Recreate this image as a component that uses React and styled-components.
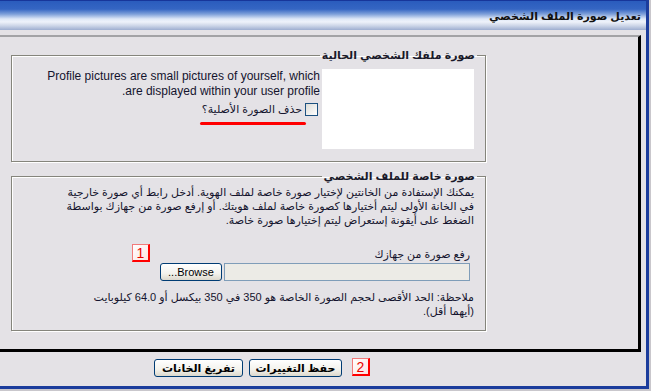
import styled, { createGlobalStyle } from 'styled-components';

const GlobalStyle = createGlobalStyle`
  html, body {
    margin: 0;
    padding: 0;
    background: #c9c7cc;
  }

  body {
    font-family: "Liberation Sans", "DejaVu Sans", sans-serif;
    font-size: 11px;
    color: #14142e;
  }
`;

function App() {
  return (
    <>
      <GlobalStyle />
      <Window dir="rtl">
        <Header>تعديل صورة الملف الشخصي</Header>
        <Body>
          <Panel>
            <Group>
              <Legend>صورة ملفك الشخصي الحالية</Legend>
              <CurrentRow>
                <Preview />
                <Info>
                  <p>
                    Profile pictures are small pictures of yourself, which
                    <br />
                    are displayed within your user profile.
                  </p>
                  <CheckRow>
                    <Check type="checkbox" />
                    <Marked>حذف الصورة الأصلية؟</Marked>
                  </CheckRow>
                </Info>
              </CurrentRow>
            </Group>

            <Group $gap>
              <Legend>صورة خاصة للملف الشخصي</Legend>
              <Intro>
                يمكنك الإستفادة من الخانتين لإختيار صورة خاصة لملف الهوية. أدخل رابط أي صورة خارجية
                <br />
                في الخانة الأولى ليتم أختيارها كصورة خاصة لملف هويتك. أو إرفع صورة من جهازك بواسطة
                <br />
                الضغط على أيقونة إستعراض ليتم إختيارها صورة خاصة.
              </Intro>

              <Upload>
                <UploadLabel>رفع صورة من جهازك</UploadLabel>
                <FileRow>
                  <FileField />
                  <BrowseButton type="button">Browse...</BrowseButton>
                  <Badge $right={320} $top={-19}>1</Badge>
                </FileRow>
              </Upload>

              <Note>
                ملاحظة: الحد الأقصى لحجم الصورة الخاصة هو 350 في 350 بيكسل أو 64.0 كيلوبايت
                <br />
                (أيهما أقل).
              </Note>
            </Group>
          </Panel>

          <Actions>
            <Badge $right={-28} $top={-1}>2</Badge>
            <Button type="button" $width={93}>حفظ التغييرات</Button>
            <Button type="button" $width={89}>تفريغ الخانات</Button>
          </Actions>
        </Body>
      </Window>
    </>
  );
}

export default App;

const Window = styled.div`
  display: flex;
  flex-direction: column;
  width: 646px;
  height: 386px;
  background: #e4e2e6;
  border-right: 3px solid #1b3c9c;
  border-bottom: 3px solid #1b3c9c;
`;

const Header = styled.div`
  display: flex;
  align-items: center;
  box-sizing: border-box;
  height: 30px;
  padding: 2px 5px 0 0;
  border-top: 1px solid #17369a;
  background: linear-gradient(
    to bottom,
    #2a5cbd 0%,
    #3566c3 28%,
    #7d9fd9 45%,
    #dfe8f7 62%,
    #eef2fa 72%,
    #cdd6e8 85%,
    #9eaed0 100%
  );
  font-weight: bold;
  font-size: 11px;
  color: #111;
`;

const Body = styled.div`
  padding: 5px 5px 0 0;
`;

const Panel = styled.div`
  box-sizing: border-box;
  height: 317px;
  padding-top: 12px;
  border-top: 2px solid #a3a3a6;
  border-right: 3px solid #000;
  border-bottom: 3px solid #000;
`;

const Group = styled.fieldset`
  box-sizing: border-box;
  width: 475px;
  margin: ${({ $gap }) => ($gap ? '8px' : '0')} 152px 0 0;
  padding: 0 11px 12px;
  border: 1px solid #85857c;
  box-shadow: 1px 1px 0 #fff, inset 1px 1px 0 #fff;
  min-inline-size: 0;
`;

const Legend = styled.legend`
  padding: 0 2px;
  margin-right: -3px;
  font-weight: bold;
  color: #1a1a2a;
`;

const CurrentRow = styled.div`
  display: flex;
  align-items: flex-start;
  gap: 2px;
  padding-top: 7px;
`;

const Preview = styled.div`
  flex: none;
  width: 152px;
  height: 80px;
  background: #fff;
`;

const Info = styled.div`
  text-align: right;

  p {
    margin: 0;
    font-size: 12px;
    line-height: 15px;
  }
`;

const CheckRow = styled.label`
  display: flex;
  align-items: center;
  gap: 3px;
  margin: 4px 2px 0 0;
`;

const Check = styled.input`
  appearance: none;
  flex: none;
  width: 13px;
  height: 13px;
  margin: 0;
  border: 1px solid #1c5180;
  background: linear-gradient(135deg, #dcdcd7, #fff);
`;

const Marked = styled.span`
  position: relative;

  &::after {
    content: '';
    position: absolute;
    left: -2px;
    right: -4px;
    bottom: -9px;
    height: 3px;
    border-radius: 2px;
    background: #ff0000;
  }
`;

const Intro = styled.p`
  margin: 2px 0 0;
  line-height: 14px;
  text-align: right;
`;

const Upload = styled.div`
  padding: 20px 4px 0 0;
`;

const UploadLabel = styled.div`
  line-height: 14px;
`;

const FileRow = styled.div`
  position: relative;
  display: flex;
  gap: 2px;
  margin-top: 2px;
`;

const FileField = styled.div`
  box-sizing: border-box;
  width: 246px;
  height: 18px;
  background: #ecebe6;
  border: 1px solid #7f9db9;
`;

const Button = styled.button`
  box-sizing: border-box;
  width: ${({ $width }) => ($width ? `${$width}px` : 'auto')};
  height: 18px;
  padding: 0;
  border: 1px solid #003c74;
  border-radius: 3px;
  background: linear-gradient(to bottom, #fff 0%, #f3f2ec 60%, #dcd8cc 100%);
  font-family: "Liberation Sans", "DejaVu Sans", sans-serif;
  font-size: 11px;
  font-weight: bold;
  color: #000;
  white-space: nowrap;
`;

const BrowseButton = styled(Button)`
  width: 62px;
  font-weight: normal;
`;

const Badge = styled.span`
  position: absolute;
  right: ${({ $right }) => $right}px;
  top: ${({ $top }) => $top}px;
  box-sizing: border-box;
  display: flex;
  align-items: center;
  justify-content: center;
  width: 18px;
  height: 18px;
  border-top: 1px solid #f27a7a;
  border-left: 1px solid #f27a7a;
  border-right: 2px solid #ff0000;
  border-bottom: 2px solid #ff0000;
  background: linear-gradient(135deg, #fff 0%, #fde2e2 100%);
  font-size: 14px;
  color: #e80000;
`;

const Note = styled.p`
  margin: 9px 0 0;
  line-height: 14px;
  text-align: right;
`;

const Actions = styled.div`
  position: relative;
  display: flex;
  gap: 6px;
  width: fit-content;
  margin: 7px 299px 0 0;
`;
